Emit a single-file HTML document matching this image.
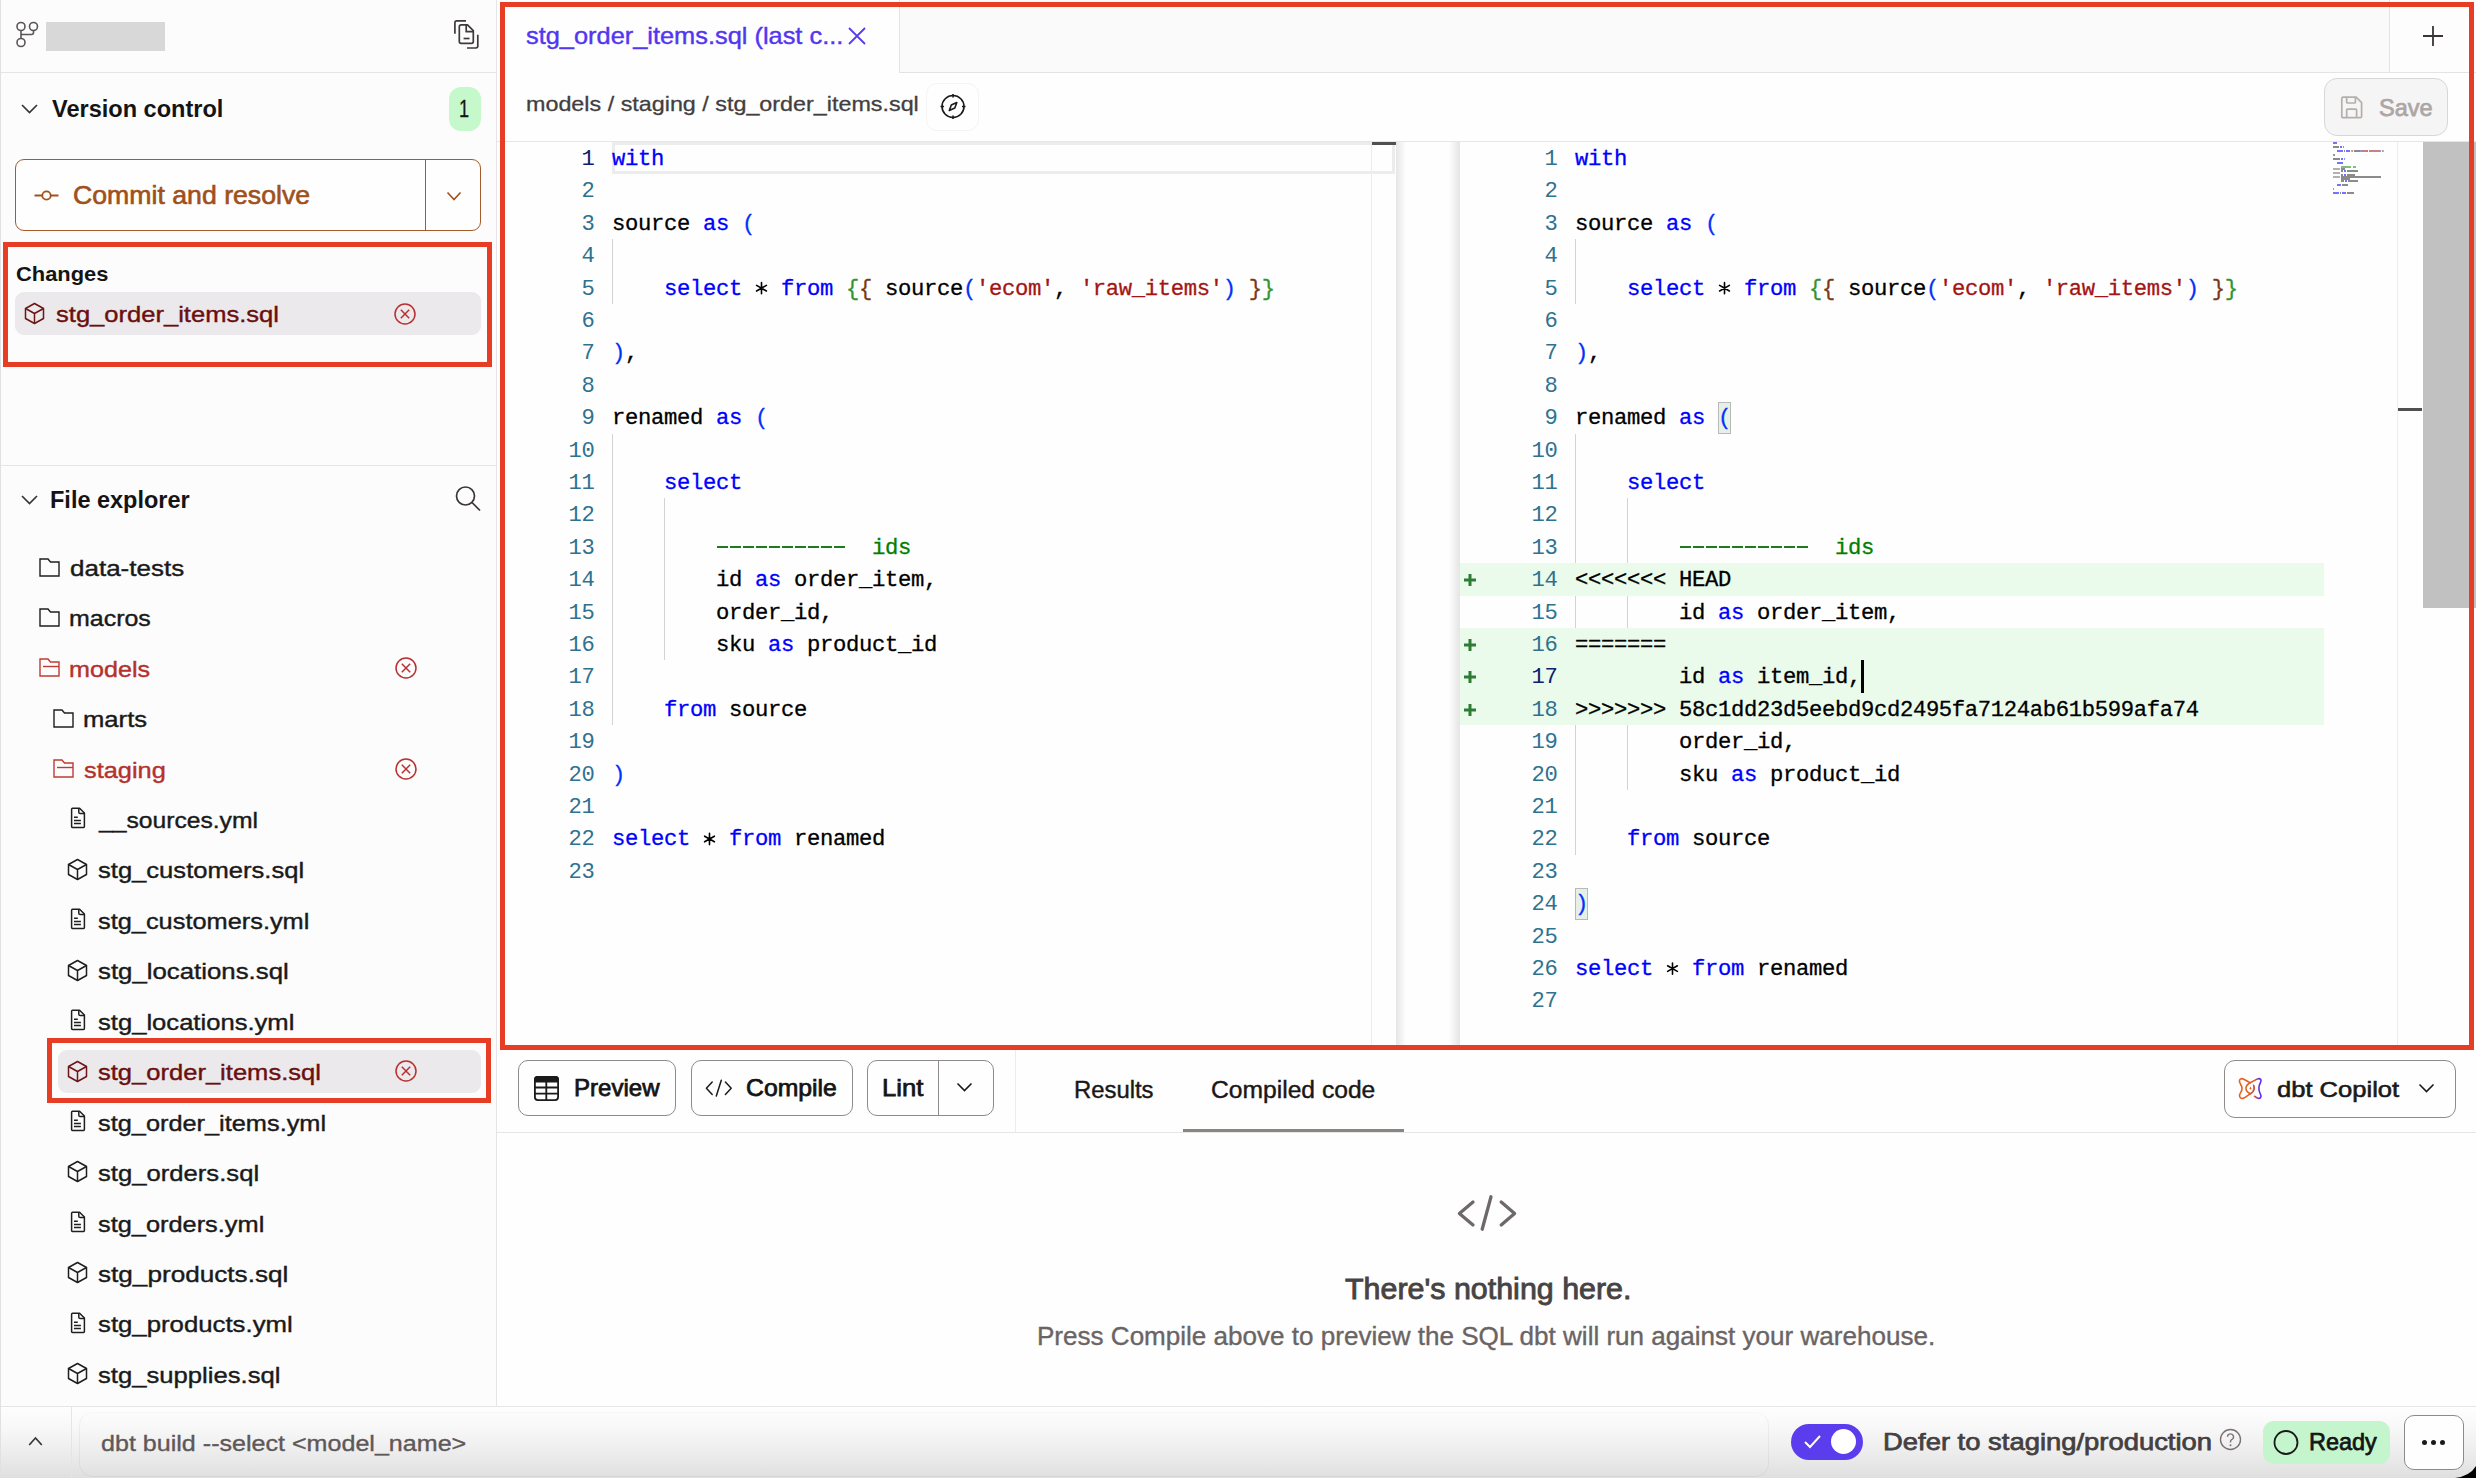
<!DOCTYPE html><html><head><meta charset="utf-8"><style>html,body{margin:0;padding:0;width:2476px;height:1478px;overflow:hidden;background:#fefefe;position:relative}</style></head><body>
<div style="position:absolute;left:0px;top:0px;width:496px;height:1406px;background:#fcfcfc"></div>
<div style="position:absolute;left:0px;top:0px;width:1px;height:1406px;background:#e9e7e9"></div>
<div style="position:absolute;left:496px;top:0px;width:1px;height:1406px;background:#e6e4e6"></div>
<div style="position:absolute;left:0px;top:72px;width:496px;height:1px;background:#e6e4e6"></div>
<svg style="position:absolute;left:14px;top:19px" width="28" height="30" viewBox="0 0 28 30" fill="none"><g stroke="#5a5555" stroke-width="1.6"><circle cx="7" cy="7.5" r="4"/><circle cx="19.5" cy="7.5" r="4"/><circle cx="7" cy="23.5" r="4"/><path d="M7 11.5V19.5M7 15.5h10.5q2 0 2-2V11.5"/></g></svg>
<div style="position:absolute;left:46px;top:22px;width:119px;height:29px;background:#d8d8d8"></div>
<svg style="position:absolute;left:446px;top:14px" width="40" height="40" viewBox="0 0 40 40" fill="none"><g stroke="#3f3a3a" stroke-width="1.7" fill="none" stroke-linejoin="round"><path d="M8.9 19.7V8.8Q8.9 6.9 10.8 6.9H20"/><path d="M13.3 12.8Q13.3 10.9 15.2 10.9H21.5L27.3 16.7V27.4Q27.3 29.3 25.4 29.3H15.2Q13.3 29.3 13.3 27.4Z"/><path d="M20.2 11V17.7H27.3"/><path d="M17.6 24.5H23.5"/><path d="M31.8 20.8V32.1Q31.8 34 29.9 34H21"/></g></svg>
<svg style="position:absolute;left:20px;top:102px" width="20" height="14" viewBox="0 0 20 14" fill="none"><path d="M2 3l7.5 7.5L17 3" stroke="#3a3535" stroke-width="1.7" fill="none"/></svg>
<div style="position:absolute;left:52.30px;top:96.91px;font:700 24.2px/24.2px 'Liberation Sans', sans-serif;color:#141414;white-space:pre;transform:scaleX(0.9733);transform-origin:0 0;">Version control</div>
<div style="position:absolute;left:449px;top:87px;width:32px;height:44px;background:#c5f9cb;border-radius:12px"></div>
<div style="position:absolute;left:459.23px;top:98.01px;font:400 23.5px/23.5px 'Liberation Sans', sans-serif;color:#141414;white-space:pre;transform:scaleX(0.7727);transform-origin:0 0;-webkit-text-stroke:0.3px #141414">1</div>
<div style="position:absolute;left:15px;top:159px;width:466px;height:72px;box-sizing:border-box;border:1.5px solid #a35a2c;border-radius:9px;background:#fefefe"></div>
<div style="position:absolute;left:425px;top:160px;width:1.2px;height:70px;background:#a35a2c"></div>
<svg style="position:absolute;left:33px;top:186px" width="28" height="20" viewBox="0 0 28 20" fill="none"><g stroke="#a0521c" stroke-width="1.8" fill="none"><circle cx="13.5" cy="9.5" r="4.2"/><path d="M1.5 9.5h7.8M17.7 9.5h7.8"/></g></svg>
<div style="position:absolute;left:73.35px;top:182.68px;font:400 25.3px/25.3px 'Liberation Sans', sans-serif;color:#a0501a;white-space:pre;transform:scaleX(1.0540);transform-origin:0 0;-webkit-text-stroke:0.6px #a0501a">Commit and resolve</div>
<svg style="position:absolute;left:444px;top:189px" width="20" height="14" viewBox="0 0 20 14" fill="none"><path d="M3.5 3.5l6.5 7 6.5-7" stroke="#a0521c" stroke-width="1.6" fill="none"/></svg>
<div style="position:absolute;left:15.70px;top:262.52px;font:700 21px/21px 'Liberation Sans', sans-serif;color:#141414;white-space:pre;transform:scaleX(1.0420);transform-origin:0 0;">Changes</div>
<div style="position:absolute;left:15px;top:292px;width:466px;height:43px;background:#ebe9eb;border-radius:9px"></div>
<svg style="position:absolute;left:24px;top:302px" width="22" height="24" viewBox="0 0 22 24" fill="none"><g stroke="#6e1515" stroke-width="1.5" fill="none" stroke-linejoin="round"><path d="M10.5 1.5l9 5v10l-9 5-9-5v-10z"/><path d="M1.5 6.5l9 5 9-5M10.5 11.5v10"/></g></svg>
<div style="position:absolute;left:55.50px;top:303.20px;font:400 22.8px/22.8px 'Liberation Sans', sans-serif;color:#6b0f0f;white-space:pre;transform:scaleX(1.1210);transform-origin:0 0;-webkit-text-stroke:0.4px #6b0f0f">stg_order_items.sql</div>
<svg style="position:absolute;left:394px;top:303px" width="22" height="22" viewBox="0 0 22 22" fill="none"><g stroke="#b83030" stroke-width="1.5" fill="none"><circle cx="11" cy="11" r="10"/><path d="M6.8 6.8l8.4 8.4M15.2 6.8l-8.4 8.4"/></g></svg>
<div style="position:absolute;left:0px;top:465px;width:496px;height:1px;background:#e6e4e6"></div>
<svg style="position:absolute;left:20px;top:493px" width="20" height="14" viewBox="0 0 20 14" fill="none"><path d="M2 3l7.5 7.5L17 3" stroke="#3a3535" stroke-width="1.7" fill="none"/></svg>
<div style="position:absolute;left:50.43px;top:488.01px;font:700 24.2px/24.2px 'Liberation Sans', sans-serif;color:#141414;white-space:pre;transform:scaleX(0.9712);transform-origin:0 0;">File explorer</div>
<svg style="position:absolute;left:453px;top:484px" width="30" height="30" viewBox="0 0 30 30" fill="none"><g stroke="#3a3535" stroke-width="1.7" fill="none"><circle cx="12.5" cy="12" r="9"/><path d="M19 18.5l8 8"/></g></svg>
<svg style="position:absolute;left:38.5px;top:558px" width="22" height="20" viewBox="0 0 22 20" fill="none"><path d="M1 1h8l2.5 3H20v14H1z" stroke="#1f1f1f" stroke-width="1.4" fill="none" stroke-linejoin="miter"/></svg>
<div style="position:absolute;left:69.90px;top:556.70px;font:400 22.8px/22.8px 'Liberation Sans', sans-serif;color:#1a1a1a;white-space:pre;transform:scaleX(1.1404);transform-origin:0 0;-webkit-text-stroke:0.4px #1a1a1a">data-tests</div>
<svg style="position:absolute;left:38.5px;top:608px" width="22" height="20" viewBox="0 0 22 20" fill="none"><path d="M1 1h8l2.5 3H20v14H1z" stroke="#1f1f1f" stroke-width="1.4" fill="none" stroke-linejoin="miter"/></svg>
<div style="position:absolute;left:68.81px;top:607.15px;font:400 22.8px/22.8px 'Liberation Sans', sans-serif;color:#1a1a1a;white-space:pre;transform:scaleX(1.0949);transform-origin:0 0;-webkit-text-stroke:0.4px #1a1a1a">macros</div>
<svg style="position:absolute;left:38.5px;top:658px" width="22" height="20" viewBox="0 0 22 20" fill="none"><g stroke="#c03a33" stroke-width="1.4" fill="none"><path d="M1 1h8l2.5 3H20v14H1z"/><path d="M4 8.5h16"/></g></svg>
<div style="position:absolute;left:68.80px;top:657.60px;font:400 22.8px/22.8px 'Liberation Sans', sans-serif;color:#b5322c;white-space:pre;transform:scaleX(1.1028);transform-origin:0 0;-webkit-text-stroke:0.4px #b5322c">models</div>
<svg style="position:absolute;left:394.5px;top:657px" width="22" height="22" viewBox="0 0 22 22" fill="none"><g stroke="#b83030" stroke-width="1.5" fill="none"><circle cx="11" cy="11" r="10"/><path d="M6.8 6.8l8.4 8.4M15.2 6.8l-8.4 8.4"/></g></svg>
<svg style="position:absolute;left:52.5px;top:709px" width="22" height="20" viewBox="0 0 22 20" fill="none"><path d="M1 1h8l2.5 3H20v14H1z" stroke="#1f1f1f" stroke-width="1.4" fill="none" stroke-linejoin="miter"/></svg>
<div style="position:absolute;left:83.08px;top:708.05px;font:400 22.8px/22.8px 'Liberation Sans', sans-serif;color:#1a1a1a;white-space:pre;transform:scaleX(1.1242);transform-origin:0 0;-webkit-text-stroke:0.4px #1a1a1a">marts</div>
<svg style="position:absolute;left:52.5px;top:759px" width="22" height="20" viewBox="0 0 22 20" fill="none"><g stroke="#c03a33" stroke-width="1.4" fill="none"><path d="M1 1h8l2.5 3H20v14H1z"/><path d="M4 8.5h16"/></g></svg>
<div style="position:absolute;left:84.20px;top:758.50px;font:400 22.8px/22.8px 'Liberation Sans', sans-serif;color:#b5322c;white-space:pre;transform:scaleX(1.1121);transform-origin:0 0;-webkit-text-stroke:0.4px #b5322c">staging</div>
<svg style="position:absolute;left:394.5px;top:758px" width="22" height="22" viewBox="0 0 22 22" fill="none"><g stroke="#b83030" stroke-width="1.5" fill="none"><circle cx="11" cy="11" r="10"/><path d="M6.8 6.8l8.4 8.4M15.2 6.8l-8.4 8.4"/></g></svg>
<svg style="position:absolute;left:69.5px;top:807px" width="16" height="22" viewBox="0 0 16 22" fill="none"><g stroke="#1f1f1f" stroke-width="1.5" fill="none" stroke-linejoin="round"><path d="M1.6 2.2Q1.6 1.2 2.6 1.2H9.6L14.4 6V19.6Q14.4 20.4 13.6 20.4H2.4Q1.6 20.4 1.6 19.6Z"/><path d="M8.8 1.2V5.2Q8.8 6.6 10.2 6.6H14.4"/><path d="M4 10.2h3.8M4 13.4h6.9M4 16.4h6.9"/></g></svg>
<div style="position:absolute;left:99.38px;top:808.95px;font:400 22.8px/22.8px 'Liberation Sans', sans-serif;color:#1a1a1a;white-space:pre;transform:scaleX(1.0817);transform-origin:0 0;-webkit-text-stroke:0.4px #1a1a1a">__sources.yml</div>
<svg style="position:absolute;left:67px;top:858px" width="22" height="24" viewBox="0 0 22 24" fill="none"><g stroke="#1f1f1f" stroke-width="1.5" fill="none" stroke-linejoin="round"><path d="M10.5 1.5l9 5v10l-9 5-9-5v-10z"/><path d="M1.5 6.5l9 5 9-5M10.5 11.5v10"/></g></svg>
<div style="position:absolute;left:98.30px;top:859.40px;font:400 22.8px/22.8px 'Liberation Sans', sans-serif;color:#1a1a1a;white-space:pre;transform:scaleX(1.1218);transform-origin:0 0;-webkit-text-stroke:0.4px #1a1a1a">stg_customers.sql</div>
<svg style="position:absolute;left:69.5px;top:908px" width="16" height="22" viewBox="0 0 16 22" fill="none"><g stroke="#1f1f1f" stroke-width="1.5" fill="none" stroke-linejoin="round"><path d="M1.6 2.2Q1.6 1.2 2.6 1.2H9.6L14.4 6V19.6Q14.4 20.4 13.6 20.4H2.4Q1.6 20.4 1.6 19.6Z"/><path d="M8.8 1.2V5.2Q8.8 6.6 10.2 6.6H14.4"/><path d="M4 10.2h3.8M4 13.4h6.9M4 16.4h6.9"/></g></svg>
<div style="position:absolute;left:98.30px;top:909.85px;font:400 22.8px/22.8px 'Liberation Sans', sans-serif;color:#1a1a1a;white-space:pre;transform:scaleX(1.1124);transform-origin:0 0;-webkit-text-stroke:0.4px #1a1a1a">stg_customers.yml</div>
<svg style="position:absolute;left:67px;top:959px" width="22" height="24" viewBox="0 0 22 24" fill="none"><g stroke="#1f1f1f" stroke-width="1.5" fill="none" stroke-linejoin="round"><path d="M10.5 1.5l9 5v10l-9 5-9-5v-10z"/><path d="M1.5 6.5l9 5 9-5M10.5 11.5v10"/></g></svg>
<div style="position:absolute;left:98.30px;top:960.30px;font:400 22.8px/22.8px 'Liberation Sans', sans-serif;color:#1a1a1a;white-space:pre;transform:scaleX(1.1315);transform-origin:0 0;-webkit-text-stroke:0.4px #1a1a1a">stg_locations.sql</div>
<svg style="position:absolute;left:69.5px;top:1009px" width="16" height="22" viewBox="0 0 16 22" fill="none"><g stroke="#1f1f1f" stroke-width="1.5" fill="none" stroke-linejoin="round"><path d="M1.6 2.2Q1.6 1.2 2.6 1.2H9.6L14.4 6V19.6Q14.4 20.4 13.6 20.4H2.4Q1.6 20.4 1.6 19.6Z"/><path d="M8.8 1.2V5.2Q8.8 6.6 10.2 6.6H14.4"/><path d="M4 10.2h3.8M4 13.4h6.9M4 16.4h6.9"/></g></svg>
<div style="position:absolute;left:98.30px;top:1010.75px;font:400 22.8px/22.8px 'Liberation Sans', sans-serif;color:#1a1a1a;white-space:pre;transform:scaleX(1.1232);transform-origin:0 0;-webkit-text-stroke:0.4px #1a1a1a">stg_locations.yml</div>
<div style="position:absolute;left:58px;top:1050px;width:423px;height:43px;background:#ebe9eb;border-radius:9px"></div>
<svg style="position:absolute;left:67px;top:1060px" width="22" height="24" viewBox="0 0 22 24" fill="none"><g stroke="#6e1515" stroke-width="1.5" fill="none" stroke-linejoin="round"><path d="M10.5 1.5l9 5v10l-9 5-9-5v-10z"/><path d="M1.5 6.5l9 5 9-5M10.5 11.5v10"/></g></svg>
<div style="position:absolute;left:98.30px;top:1061.20px;font:400 22.8px/22.8px 'Liberation Sans', sans-serif;color:#6b0f0f;white-space:pre;transform:scaleX(1.1205);transform-origin:0 0;-webkit-text-stroke:0.4px #6b0f0f">stg_order_items.sql</div>
<svg style="position:absolute;left:394.5px;top:1060px" width="22" height="22" viewBox="0 0 22 22" fill="none"><g stroke="#b83030" stroke-width="1.5" fill="none"><circle cx="11" cy="11" r="10"/><path d="M6.8 6.8l8.4 8.4M15.2 6.8l-8.4 8.4"/></g></svg>
<svg style="position:absolute;left:69.5px;top:1110px" width="16" height="22" viewBox="0 0 16 22" fill="none"><g stroke="#1f1f1f" stroke-width="1.5" fill="none" stroke-linejoin="round"><path d="M1.6 2.2Q1.6 1.2 2.6 1.2H9.6L14.4 6V19.6Q14.4 20.4 13.6 20.4H2.4Q1.6 20.4 1.6 19.6Z"/><path d="M8.8 1.2V5.2Q8.8 6.6 10.2 6.6H14.4"/><path d="M4 10.2h3.8M4 13.4h6.9M4 16.4h6.9"/></g></svg>
<div style="position:absolute;left:98.30px;top:1111.65px;font:400 22.8px/22.8px 'Liberation Sans', sans-serif;color:#1a1a1a;white-space:pre;transform:scaleX(1.1113);transform-origin:0 0;-webkit-text-stroke:0.4px #1a1a1a">stg_order_items.yml</div>
<svg style="position:absolute;left:67px;top:1160px" width="22" height="24" viewBox="0 0 22 24" fill="none"><g stroke="#1f1f1f" stroke-width="1.5" fill="none" stroke-linejoin="round"><path d="M10.5 1.5l9 5v10l-9 5-9-5v-10z"/><path d="M1.5 6.5l9 5 9-5M10.5 11.5v10"/></g></svg>
<div style="position:absolute;left:98.30px;top:1162.10px;font:400 22.8px/22.8px 'Liberation Sans', sans-serif;color:#1a1a1a;white-space:pre;transform:scaleX(1.1251);transform-origin:0 0;-webkit-text-stroke:0.4px #1a1a1a">stg_orders.sql</div>
<svg style="position:absolute;left:69.5px;top:1211px" width="16" height="22" viewBox="0 0 16 22" fill="none"><g stroke="#1f1f1f" stroke-width="1.5" fill="none" stroke-linejoin="round"><path d="M1.6 2.2Q1.6 1.2 2.6 1.2H9.6L14.4 6V19.6Q14.4 20.4 13.6 20.4H2.4Q1.6 20.4 1.6 19.6Z"/><path d="M8.8 1.2V5.2Q8.8 6.6 10.2 6.6H14.4"/><path d="M4 10.2h3.8M4 13.4h6.9M4 16.4h6.9"/></g></svg>
<div style="position:absolute;left:98.30px;top:1212.55px;font:400 22.8px/22.8px 'Liberation Sans', sans-serif;color:#1a1a1a;white-space:pre;transform:scaleX(1.1123);transform-origin:0 0;-webkit-text-stroke:0.4px #1a1a1a">stg_orders.yml</div>
<svg style="position:absolute;left:67px;top:1261px" width="22" height="24" viewBox="0 0 22 24" fill="none"><g stroke="#1f1f1f" stroke-width="1.5" fill="none" stroke-linejoin="round"><path d="M10.5 1.5l9 5v10l-9 5-9-5v-10z"/><path d="M1.5 6.5l9 5 9-5M10.5 11.5v10"/></g></svg>
<div style="position:absolute;left:98.30px;top:1263.00px;font:400 22.8px/22.8px 'Liberation Sans', sans-serif;color:#1a1a1a;white-space:pre;transform:scaleX(1.1465);transform-origin:0 0;-webkit-text-stroke:0.4px #1a1a1a">stg_products.sql</div>
<svg style="position:absolute;left:69.5px;top:1312px" width="16" height="22" viewBox="0 0 16 22" fill="none"><g stroke="#1f1f1f" stroke-width="1.5" fill="none" stroke-linejoin="round"><path d="M1.6 2.2Q1.6 1.2 2.6 1.2H9.6L14.4 6V19.6Q14.4 20.4 13.6 20.4H2.4Q1.6 20.4 1.6 19.6Z"/><path d="M8.8 1.2V5.2Q8.8 6.6 10.2 6.6H14.4"/><path d="M4 10.2h3.8M4 13.4h6.9M4 16.4h6.9"/></g></svg>
<div style="position:absolute;left:98.30px;top:1313.45px;font:400 22.8px/22.8px 'Liberation Sans', sans-serif;color:#1a1a1a;white-space:pre;transform:scaleX(1.1299);transform-origin:0 0;-webkit-text-stroke:0.4px #1a1a1a">stg_products.yml</div>
<svg style="position:absolute;left:67px;top:1362px" width="22" height="24" viewBox="0 0 22 24" fill="none"><g stroke="#1f1f1f" stroke-width="1.5" fill="none" stroke-linejoin="round"><path d="M10.5 1.5l9 5v10l-9 5-9-5v-10z"/><path d="M1.5 6.5l9 5 9-5M10.5 11.5v10"/></g></svg>
<div style="position:absolute;left:98.30px;top:1363.90px;font:400 22.8px/22.8px 'Liberation Sans', sans-serif;color:#1a1a1a;white-space:pre;transform:scaleX(1.1251);transform-origin:0 0;-webkit-text-stroke:0.4px #1a1a1a">stg_supplies.sql</div>
<div style="position:absolute;left:497px;top:0px;width:1979px;height:72px;background:#fafafa"></div>
<div style="position:absolute;left:899px;top:72px;width:1577px;height:1px;background:#e4e4e4"></div>
<div style="position:absolute;left:497px;top:0px;width:402px;height:73px;background:#fefefe"></div>
<div style="position:absolute;left:899px;top:0px;width:1px;height:72px;background:#e4e4e4"></div>
<div style="position:absolute;left:2389px;top:0px;width:1px;height:72px;background:#e4e4e4"></div>
<div style="position:absolute;left:2390px;top:0px;width:86px;height:72px;background:#fdfdfd"></div>
<div style="position:absolute;left:526.30px;top:25.16px;font:400 23.2px/23.2px 'Liberation Sans', sans-serif;color:#5236f0;white-space:pre;transform:scaleX(1.0943);transform-origin:0 0;-webkit-text-stroke:0.4px #5236f0">stg_order_items.sql (last c...</div>
<svg style="position:absolute;left:847px;top:26px" width="20" height="20" viewBox="0 0 20 20" fill="none"><path d="M2 2l16 16M18 2L2 18" stroke="#5a3af0" stroke-width="1.8"/></svg>
<svg style="position:absolute;left:2421px;top:24px" width="24" height="24" viewBox="0 0 24 24" fill="none"><path d="M12 2v20M2 12h20" stroke="#3a3535" stroke-width="1.8"/></svg>
<div style="position:absolute;left:497px;top:73px;width:1979px;height:69px;background:#fefefe"></div>
<div style="position:absolute;left:497px;top:141px;width:1979px;height:1px;background:#e6e6e6"></div>
<div style="position:absolute;left:525.88px;top:94.09px;font:400 20.8px/20.8px 'Liberation Sans', sans-serif;color:#433e3e;white-space:pre;transform:scaleX(1.1215);transform-origin:0 0;-webkit-text-stroke:0.3px #433e3e">models / staging / stg_order_items.sql</div>
<div style="position:absolute;left:926px;top:83px;width:53px;height:48px;box-sizing:border-box;border:1px solid #f4f4f4;border-radius:11px;background:#fefefe"></div>
<svg style="position:absolute;left:939px;top:93px" width="28" height="28" viewBox="0 0 28 28" fill="none"><g stroke="#1a1a1a" stroke-width="1.6" fill="none"><circle cx="14" cy="13.5" r="11"/><path d="M14 1v3.5M14 22.5V26M1.5 13.5H5M23 13.5h3.5"/><path d="M17.8 9.5l-2 5.5-5.5 2.5 2-5.5z" stroke-linejoin="round"/></g></svg>
<div style="position:absolute;left:2324px;top:78px;width:124px;height:58px;box-sizing:border-box;border:1.5px solid #d9d6d6;border-radius:13px;background:#f5f5f5"></div>
<svg style="position:absolute;left:2339px;top:95px" width="26" height="26" viewBox="0 0 26 26" fill="none"><g stroke="#b4aeac" stroke-width="1.7" fill="none" stroke-linejoin="round"><path d="M2.8 3.4Q2.8 2.2 4 2.2H17.2L22.6 7.6V21.4Q22.6 22.6 21.4 22.6H4Q2.8 22.6 2.8 21.4Z"/><path d="M7.7 2.2V7.2Q7.7 8 8.5 8H15.6Q16.4 8 16.4 7.2V2.2"/><path d="M7.7 22.6V15Q7.7 14.2 8.5 14.2H16.8Q17.6 14.2 17.6 15V22.6"/></g></svg>
<div style="position:absolute;left:2378.74px;top:95.98px;font:400 24.6px/24.6px 'Liberation Sans', sans-serif;color:#aca6a4;white-space:pre;transform:scaleX(0.9581);transform-origin:0 0;-webkit-text-stroke:0.75px #aca6a4">Save</div>
<div style="position:absolute;left:497px;top:142px;width:1979px;height:908px;background:#fefefe"></div>
<div style="position:absolute;left:612px;top:142px;width:783px;height:32px;box-sizing:border-box;border:3px solid #ececec"></div>
<div style="position:absolute;left:612.0px;top:239.2px;width:1.3px;height:64.8px;background:#d3d3d3"></div>
<div style="position:absolute;left:612.0px;top:433.6px;width:1.3px;height:291.6px;background:#d3d3d3"></div>
<div style="position:absolute;left:664.0px;top:498.4px;width:1.3px;height:162.0px;background:#d3d3d3"></div>
<div style="position:absolute;left:581.5px;top:149.08px;font:400 22.2px/22.2px 'Liberation Mono', monospace;color:#0b216f;white-space:pre;letter-spacing:-0.32px">1</div>
<div style="position:absolute;left:612px;top:149.08px;font:400 22.2px/22.2px 'Liberation Mono', monospace;color:#000;white-space:pre;letter-spacing:-0.32px;-webkit-text-stroke:0.3px currentColor"><span style="color:#0000ff">with</span></div>
<div style="position:absolute;left:581.5px;top:181.48px;font:400 22.2px/22.2px 'Liberation Mono', monospace;color:#2e7290;white-space:pre;letter-spacing:-0.32px">2</div>
<div style="position:absolute;left:581.5px;top:213.88px;font:400 22.2px/22.2px 'Liberation Mono', monospace;color:#2e7290;white-space:pre;letter-spacing:-0.32px">3</div>
<div style="position:absolute;left:612px;top:213.88px;font:400 22.2px/22.2px 'Liberation Mono', monospace;color:#000;white-space:pre;letter-spacing:-0.32px;-webkit-text-stroke:0.3px currentColor"><span style="color:#000000">source</span><span style="color:#000000"> </span><span style="color:#0000ff">as</span><span style="color:#000000"> </span><span style="color:#0431fa">(</span></div>
<div style="position:absolute;left:581.5px;top:246.28px;font:400 22.2px/22.2px 'Liberation Mono', monospace;color:#2e7290;white-space:pre;letter-spacing:-0.32px">4</div>
<div style="position:absolute;left:581.5px;top:278.68px;font:400 22.2px/22.2px 'Liberation Mono', monospace;color:#2e7290;white-space:pre;letter-spacing:-0.32px">5</div>
<div style="position:absolute;left:612px;top:278.68px;font:400 22.2px/22.2px 'Liberation Mono', monospace;color:#000;white-space:pre;letter-spacing:-0.32px;-webkit-text-stroke:0.3px currentColor"><span style="color:#000000">    </span><span style="color:#0000ff">select</span><span style="color:#000000"> </span><span style="color:#000000"> </span><span style="color:#000000"> </span><span style="color:#0000ff">from</span><span style="color:#000000"> </span><span style="color:#319331">{</span><span style="color:#7b3814">{</span><span style="color:#000000"> </span><span style="color:#000000">source</span><span style="color:#0431fa">(</span><span style="color:#a31515">&#x27;ecom&#x27;</span><span style="color:#000000">,</span><span style="color:#000000"> </span><span style="color:#a31515">&#x27;raw_items&#x27;</span><span style="color:#0431fa">)</span><span style="color:#000000"> </span><span style="color:#7b3814">}</span><span style="color:#319331">}</span></div>
<svg style="position:absolute;left:754px;top:280px" width="16" height="16" viewBox="0 0 16 16" fill="none"><g stroke="#000" stroke-width="1.6" stroke-linecap="round" transform="translate(7.50,8.20)"><path d="M0 -5.6V5.6M-4.9 -2.8L4.9 2.8M-4.9 2.8L4.9 -2.8"/></g></svg>
<div style="position:absolute;left:581.5px;top:311.08px;font:400 22.2px/22.2px 'Liberation Mono', monospace;color:#2e7290;white-space:pre;letter-spacing:-0.32px">6</div>
<div style="position:absolute;left:581.5px;top:343.48px;font:400 22.2px/22.2px 'Liberation Mono', monospace;color:#2e7290;white-space:pre;letter-spacing:-0.32px">7</div>
<div style="position:absolute;left:612px;top:343.48px;font:400 22.2px/22.2px 'Liberation Mono', monospace;color:#000;white-space:pre;letter-spacing:-0.32px;-webkit-text-stroke:0.3px currentColor"><span style="color:#0431fa">)</span><span style="color:#000000">,</span></div>
<div style="position:absolute;left:581.5px;top:375.88px;font:400 22.2px/22.2px 'Liberation Mono', monospace;color:#2e7290;white-space:pre;letter-spacing:-0.32px">8</div>
<div style="position:absolute;left:581.5px;top:408.28px;font:400 22.2px/22.2px 'Liberation Mono', monospace;color:#2e7290;white-space:pre;letter-spacing:-0.32px">9</div>
<div style="position:absolute;left:612px;top:408.28px;font:400 22.2px/22.2px 'Liberation Mono', monospace;color:#000;white-space:pre;letter-spacing:-0.32px;-webkit-text-stroke:0.3px currentColor"><span style="color:#000000">renamed</span><span style="color:#000000"> </span><span style="color:#0000ff">as</span><span style="color:#000000"> </span><span style="color:#0431fa">(</span></div>
<div style="position:absolute;left:568.5px;top:440.68px;font:400 22.2px/22.2px 'Liberation Mono', monospace;color:#2e7290;white-space:pre;letter-spacing:-0.32px">10</div>
<div style="position:absolute;left:568.5px;top:473.08px;font:400 22.2px/22.2px 'Liberation Mono', monospace;color:#2e7290;white-space:pre;letter-spacing:-0.32px">11</div>
<div style="position:absolute;left:612px;top:473.08px;font:400 22.2px/22.2px 'Liberation Mono', monospace;color:#000;white-space:pre;letter-spacing:-0.32px;-webkit-text-stroke:0.3px currentColor"><span style="color:#000000">    </span><span style="color:#0000ff">select</span></div>
<div style="position:absolute;left:568.5px;top:505.48px;font:400 22.2px/22.2px 'Liberation Mono', monospace;color:#2e7290;white-space:pre;letter-spacing:-0.32px">12</div>
<div style="position:absolute;left:568.5px;top:537.88px;font:400 22.2px/22.2px 'Liberation Mono', monospace;color:#2e7290;white-space:pre;letter-spacing:-0.32px">13</div>
<div style="position:absolute;left:612px;top:537.88px;font:400 22.2px/22.2px 'Liberation Mono', monospace;color:#000;white-space:pre;letter-spacing:-0.32px;-webkit-text-stroke:0.3px currentColor"><span style="color:#000000">        </span><span style="color:#008000">            ids</span></div>
<div style="position:absolute;left:717.0px;top:546.1px;width:128.0px;height:2.2px;background:repeating-linear-gradient(to right,#1d7a1d 0 11px,transparent 11px 13px)"></div>
<div style="position:absolute;left:568.5px;top:570.28px;font:400 22.2px/22.2px 'Liberation Mono', monospace;color:#2e7290;white-space:pre;letter-spacing:-0.32px">14</div>
<div style="position:absolute;left:612px;top:570.28px;font:400 22.2px/22.2px 'Liberation Mono', monospace;color:#000;white-space:pre;letter-spacing:-0.32px;-webkit-text-stroke:0.3px currentColor"><span style="color:#000000">        </span><span style="color:#000000">id</span><span style="color:#000000"> </span><span style="color:#0000ff">as</span><span style="color:#000000"> </span><span style="color:#000000">order_item</span><span style="color:#000000">,</span></div>
<div style="position:absolute;left:568.5px;top:602.68px;font:400 22.2px/22.2px 'Liberation Mono', monospace;color:#2e7290;white-space:pre;letter-spacing:-0.32px">15</div>
<div style="position:absolute;left:612px;top:602.68px;font:400 22.2px/22.2px 'Liberation Mono', monospace;color:#000;white-space:pre;letter-spacing:-0.32px;-webkit-text-stroke:0.3px currentColor"><span style="color:#000000">        </span><span style="color:#000000">order_id</span><span style="color:#000000">,</span></div>
<div style="position:absolute;left:568.5px;top:635.08px;font:400 22.2px/22.2px 'Liberation Mono', monospace;color:#2e7290;white-space:pre;letter-spacing:-0.32px">16</div>
<div style="position:absolute;left:612px;top:635.08px;font:400 22.2px/22.2px 'Liberation Mono', monospace;color:#000;white-space:pre;letter-spacing:-0.32px;-webkit-text-stroke:0.3px currentColor"><span style="color:#000000">        </span><span style="color:#000000">sku</span><span style="color:#000000"> </span><span style="color:#0000ff">as</span><span style="color:#000000"> </span><span style="color:#000000">product_id</span></div>
<div style="position:absolute;left:568.5px;top:667.48px;font:400 22.2px/22.2px 'Liberation Mono', monospace;color:#2e7290;white-space:pre;letter-spacing:-0.32px">17</div>
<div style="position:absolute;left:568.5px;top:699.88px;font:400 22.2px/22.2px 'Liberation Mono', monospace;color:#2e7290;white-space:pre;letter-spacing:-0.32px">18</div>
<div style="position:absolute;left:612px;top:699.88px;font:400 22.2px/22.2px 'Liberation Mono', monospace;color:#000;white-space:pre;letter-spacing:-0.32px;-webkit-text-stroke:0.3px currentColor"><span style="color:#000000">    </span><span style="color:#0000ff">from</span><span style="color:#000000"> </span><span style="color:#000000">source</span></div>
<div style="position:absolute;left:568.5px;top:732.28px;font:400 22.2px/22.2px 'Liberation Mono', monospace;color:#2e7290;white-space:pre;letter-spacing:-0.32px">19</div>
<div style="position:absolute;left:568.5px;top:764.68px;font:400 22.2px/22.2px 'Liberation Mono', monospace;color:#2e7290;white-space:pre;letter-spacing:-0.32px">20</div>
<div style="position:absolute;left:612px;top:764.68px;font:400 22.2px/22.2px 'Liberation Mono', monospace;color:#000;white-space:pre;letter-spacing:-0.32px;-webkit-text-stroke:0.3px currentColor"><span style="color:#0431fa">)</span></div>
<div style="position:absolute;left:568.5px;top:797.08px;font:400 22.2px/22.2px 'Liberation Mono', monospace;color:#2e7290;white-space:pre;letter-spacing:-0.32px">21</div>
<div style="position:absolute;left:568.5px;top:829.48px;font:400 22.2px/22.2px 'Liberation Mono', monospace;color:#2e7290;white-space:pre;letter-spacing:-0.32px">22</div>
<div style="position:absolute;left:612px;top:829.48px;font:400 22.2px/22.2px 'Liberation Mono', monospace;color:#000;white-space:pre;letter-spacing:-0.32px;-webkit-text-stroke:0.3px currentColor"><span style="color:#0000ff">select</span><span style="color:#000000"> </span><span style="color:#000000"> </span><span style="color:#000000"> </span><span style="color:#0000ff">from</span><span style="color:#000000"> </span><span style="color:#000000">renamed</span></div>
<svg style="position:absolute;left:702px;top:831px" width="16" height="16" viewBox="0 0 16 16" fill="none"><g stroke="#000" stroke-width="1.6" stroke-linecap="round" transform="translate(7.50,8.00)"><path d="M0 -5.6V5.6M-4.9 -2.8L4.9 2.8M-4.9 2.8L4.9 -2.8"/></g></svg>
<div style="position:absolute;left:568.5px;top:861.88px;font:400 22.2px/22.2px 'Liberation Mono', monospace;color:#2e7290;white-space:pre;letter-spacing:-0.32px">23</div>
<div style="position:absolute;left:1460px;top:563.2px;width:864px;height:32.4px;background:#eafbec"></div>
<div style="position:absolute;left:1460px;top:628.0px;width:864px;height:32.4px;background:#eafbec"></div>
<div style="position:absolute;left:1460px;top:660.4px;width:864px;height:32.4px;background:#eafbec"></div>
<div style="position:absolute;left:1460px;top:692.8px;width:864px;height:32.4px;background:#eafbec"></div>
<div style="position:absolute;left:1575.0px;top:239.2px;width:1.3px;height:64.8px;background:#d3d3d3"></div>
<div style="position:absolute;left:1575.0px;top:433.6px;width:1.3px;height:129.6px;background:#d3d3d3"></div>
<div style="position:absolute;left:1575.0px;top:595.6px;width:1.3px;height:32.4px;background:#d3d3d3"></div>
<div style="position:absolute;left:1575.0px;top:725.2px;width:1.3px;height:129.6px;background:#d3d3d3"></div>
<div style="position:absolute;left:1627.0px;top:498.4px;width:1.3px;height:64.8px;background:#d3d3d3"></div>
<div style="position:absolute;left:1627.0px;top:595.6px;width:1.3px;height:32.4px;background:#d3d3d3"></div>
<div style="position:absolute;left:1627.0px;top:725.2px;width:1.3px;height:64.8px;background:#d3d3d3"></div>
<div style="position:absolute;left:1718.0px;top:401.7px;width:13px;height:32px;box-sizing:border-box;border:1px solid #b9b9b9;background:#e6f0e6"></div>
<div style="position:absolute;left:1575.0px;top:887.7px;width:13px;height:32px;box-sizing:border-box;border:1px solid #b9b9b9;background:#e6f0e6"></div>
<div style="position:absolute;left:1544.5px;top:149.08px;font:400 22.2px/22.2px 'Liberation Mono', monospace;color:#2e7290;white-space:pre;letter-spacing:-0.32px">1</div>
<div style="position:absolute;left:1575px;top:149.08px;font:400 22.2px/22.2px 'Liberation Mono', monospace;color:#000;white-space:pre;letter-spacing:-0.32px;-webkit-text-stroke:0.3px currentColor"><span style="color:#0000ff">with</span></div>
<div style="position:absolute;left:1544.5px;top:181.48px;font:400 22.2px/22.2px 'Liberation Mono', monospace;color:#2e7290;white-space:pre;letter-spacing:-0.32px">2</div>
<div style="position:absolute;left:1544.5px;top:213.88px;font:400 22.2px/22.2px 'Liberation Mono', monospace;color:#2e7290;white-space:pre;letter-spacing:-0.32px">3</div>
<div style="position:absolute;left:1575px;top:213.88px;font:400 22.2px/22.2px 'Liberation Mono', monospace;color:#000;white-space:pre;letter-spacing:-0.32px;-webkit-text-stroke:0.3px currentColor"><span style="color:#000000">source</span><span style="color:#000000"> </span><span style="color:#0000ff">as</span><span style="color:#000000"> </span><span style="color:#0431fa">(</span></div>
<div style="position:absolute;left:1544.5px;top:246.28px;font:400 22.2px/22.2px 'Liberation Mono', monospace;color:#2e7290;white-space:pre;letter-spacing:-0.32px">4</div>
<div style="position:absolute;left:1544.5px;top:278.68px;font:400 22.2px/22.2px 'Liberation Mono', monospace;color:#2e7290;white-space:pre;letter-spacing:-0.32px">5</div>
<div style="position:absolute;left:1575px;top:278.68px;font:400 22.2px/22.2px 'Liberation Mono', monospace;color:#000;white-space:pre;letter-spacing:-0.32px;-webkit-text-stroke:0.3px currentColor"><span style="color:#000000">    </span><span style="color:#0000ff">select</span><span style="color:#000000"> </span><span style="color:#000000"> </span><span style="color:#000000"> </span><span style="color:#0000ff">from</span><span style="color:#000000"> </span><span style="color:#319331">{</span><span style="color:#7b3814">{</span><span style="color:#000000"> </span><span style="color:#000000">source</span><span style="color:#0431fa">(</span><span style="color:#a31515">&#x27;ecom&#x27;</span><span style="color:#000000">,</span><span style="color:#000000"> </span><span style="color:#a31515">&#x27;raw_items&#x27;</span><span style="color:#0431fa">)</span><span style="color:#000000"> </span><span style="color:#7b3814">}</span><span style="color:#319331">}</span></div>
<svg style="position:absolute;left:1716px;top:280px" width="16" height="16" viewBox="0 0 16 16" fill="none"><g stroke="#000" stroke-width="1.6" stroke-linecap="round" transform="translate(8.50,8.20)"><path d="M0 -5.6V5.6M-4.9 -2.8L4.9 2.8M-4.9 2.8L4.9 -2.8"/></g></svg>
<div style="position:absolute;left:1544.5px;top:311.08px;font:400 22.2px/22.2px 'Liberation Mono', monospace;color:#2e7290;white-space:pre;letter-spacing:-0.32px">6</div>
<div style="position:absolute;left:1544.5px;top:343.48px;font:400 22.2px/22.2px 'Liberation Mono', monospace;color:#2e7290;white-space:pre;letter-spacing:-0.32px">7</div>
<div style="position:absolute;left:1575px;top:343.48px;font:400 22.2px/22.2px 'Liberation Mono', monospace;color:#000;white-space:pre;letter-spacing:-0.32px;-webkit-text-stroke:0.3px currentColor"><span style="color:#0431fa">)</span><span style="color:#000000">,</span></div>
<div style="position:absolute;left:1544.5px;top:375.88px;font:400 22.2px/22.2px 'Liberation Mono', monospace;color:#2e7290;white-space:pre;letter-spacing:-0.32px">8</div>
<div style="position:absolute;left:1544.5px;top:408.28px;font:400 22.2px/22.2px 'Liberation Mono', monospace;color:#2e7290;white-space:pre;letter-spacing:-0.32px">9</div>
<div style="position:absolute;left:1575px;top:408.28px;font:400 22.2px/22.2px 'Liberation Mono', monospace;color:#000;white-space:pre;letter-spacing:-0.32px;-webkit-text-stroke:0.3px currentColor"><span style="color:#000000">renamed</span><span style="color:#000000"> </span><span style="color:#0000ff">as</span><span style="color:#000000"> </span><span style="color:#0431fa">(</span></div>
<div style="position:absolute;left:1531.5px;top:440.68px;font:400 22.2px/22.2px 'Liberation Mono', monospace;color:#2e7290;white-space:pre;letter-spacing:-0.32px">10</div>
<div style="position:absolute;left:1531.5px;top:473.08px;font:400 22.2px/22.2px 'Liberation Mono', monospace;color:#2e7290;white-space:pre;letter-spacing:-0.32px">11</div>
<div style="position:absolute;left:1575px;top:473.08px;font:400 22.2px/22.2px 'Liberation Mono', monospace;color:#000;white-space:pre;letter-spacing:-0.32px;-webkit-text-stroke:0.3px currentColor"><span style="color:#000000">    </span><span style="color:#0000ff">select</span></div>
<div style="position:absolute;left:1531.5px;top:505.48px;font:400 22.2px/22.2px 'Liberation Mono', monospace;color:#2e7290;white-space:pre;letter-spacing:-0.32px">12</div>
<div style="position:absolute;left:1531.5px;top:537.88px;font:400 22.2px/22.2px 'Liberation Mono', monospace;color:#2e7290;white-space:pre;letter-spacing:-0.32px">13</div>
<div style="position:absolute;left:1575px;top:537.88px;font:400 22.2px/22.2px 'Liberation Mono', monospace;color:#000;white-space:pre;letter-spacing:-0.32px;-webkit-text-stroke:0.3px currentColor"><span style="color:#000000">        </span><span style="color:#008000">            ids</span></div>
<div style="position:absolute;left:1680.0px;top:546.1px;width:128.0px;height:2.2px;background:repeating-linear-gradient(to right,#1d7a1d 0 11px,transparent 11px 13px)"></div>
<div style="position:absolute;left:1531.5px;top:570.28px;font:400 22.2px/22.2px 'Liberation Mono', monospace;color:#2e7290;white-space:pre;letter-spacing:-0.32px">14</div>
<div style="position:absolute;left:1575px;top:570.28px;font:400 22.2px/22.2px 'Liberation Mono', monospace;color:#000;white-space:pre;letter-spacing:-0.32px;-webkit-text-stroke:0.3px currentColor"><span style="color:#000000">&lt;&lt;&lt;&lt;&lt;&lt;&lt;</span><span style="color:#000000"> </span><span style="color:#000000">HEAD</span></div>
<div style="position:absolute;left:1531.5px;top:602.68px;font:400 22.2px/22.2px 'Liberation Mono', monospace;color:#2e7290;white-space:pre;letter-spacing:-0.32px">15</div>
<div style="position:absolute;left:1575px;top:602.68px;font:400 22.2px/22.2px 'Liberation Mono', monospace;color:#000;white-space:pre;letter-spacing:-0.32px;-webkit-text-stroke:0.3px currentColor"><span style="color:#000000">        </span><span style="color:#000000">id</span><span style="color:#000000"> </span><span style="color:#0000ff">as</span><span style="color:#000000"> </span><span style="color:#000000">order_item</span><span style="color:#000000">,</span></div>
<div style="position:absolute;left:1531.5px;top:635.08px;font:400 22.2px/22.2px 'Liberation Mono', monospace;color:#2e7290;white-space:pre;letter-spacing:-0.32px">16</div>
<div style="position:absolute;left:1575px;top:635.08px;font:400 22.2px/22.2px 'Liberation Mono', monospace;color:#000;white-space:pre;letter-spacing:-0.32px;-webkit-text-stroke:0.3px currentColor"><span style="color:#000000">=======</span></div>
<div style="position:absolute;left:1531.5px;top:667.48px;font:400 22.2px/22.2px 'Liberation Mono', monospace;color:#0b216f;white-space:pre;letter-spacing:-0.32px">17</div>
<div style="position:absolute;left:1575px;top:667.48px;font:400 22.2px/22.2px 'Liberation Mono', monospace;color:#000;white-space:pre;letter-spacing:-0.32px;-webkit-text-stroke:0.3px currentColor"><span style="color:#000000">        </span><span style="color:#000000">id</span><span style="color:#000000"> </span><span style="color:#0000ff">as</span><span style="color:#000000"> </span><span style="color:#000000">item_id</span><span style="color:#000000">,</span></div>
<div style="position:absolute;left:1531.5px;top:699.88px;font:400 22.2px/22.2px 'Liberation Mono', monospace;color:#2e7290;white-space:pre;letter-spacing:-0.32px">18</div>
<div style="position:absolute;left:1575px;top:699.88px;font:400 22.2px/22.2px 'Liberation Mono', monospace;color:#000;white-space:pre;letter-spacing:-0.32px;-webkit-text-stroke:0.3px currentColor"><span style="color:#000000">&gt;&gt;&gt;&gt;&gt;&gt;&gt;</span><span style="color:#000000"> </span><span style="color:#000000">58</span><span style="color:#000000">c1dd23d5eebd9cd2495fa7124ab61b599afa74</span></div>
<div style="position:absolute;left:1531.5px;top:732.28px;font:400 22.2px/22.2px 'Liberation Mono', monospace;color:#2e7290;white-space:pre;letter-spacing:-0.32px">19</div>
<div style="position:absolute;left:1575px;top:732.28px;font:400 22.2px/22.2px 'Liberation Mono', monospace;color:#000;white-space:pre;letter-spacing:-0.32px;-webkit-text-stroke:0.3px currentColor"><span style="color:#000000">        </span><span style="color:#000000">order_id</span><span style="color:#000000">,</span></div>
<div style="position:absolute;left:1531.5px;top:764.68px;font:400 22.2px/22.2px 'Liberation Mono', monospace;color:#2e7290;white-space:pre;letter-spacing:-0.32px">20</div>
<div style="position:absolute;left:1575px;top:764.68px;font:400 22.2px/22.2px 'Liberation Mono', monospace;color:#000;white-space:pre;letter-spacing:-0.32px;-webkit-text-stroke:0.3px currentColor"><span style="color:#000000">        </span><span style="color:#000000">sku</span><span style="color:#000000"> </span><span style="color:#0000ff">as</span><span style="color:#000000"> </span><span style="color:#000000">product_id</span></div>
<div style="position:absolute;left:1531.5px;top:797.08px;font:400 22.2px/22.2px 'Liberation Mono', monospace;color:#2e7290;white-space:pre;letter-spacing:-0.32px">21</div>
<div style="position:absolute;left:1531.5px;top:829.48px;font:400 22.2px/22.2px 'Liberation Mono', monospace;color:#2e7290;white-space:pre;letter-spacing:-0.32px">22</div>
<div style="position:absolute;left:1575px;top:829.48px;font:400 22.2px/22.2px 'Liberation Mono', monospace;color:#000;white-space:pre;letter-spacing:-0.32px;-webkit-text-stroke:0.3px currentColor"><span style="color:#000000">    </span><span style="color:#0000ff">from</span><span style="color:#000000"> </span><span style="color:#000000">source</span></div>
<div style="position:absolute;left:1531.5px;top:861.88px;font:400 22.2px/22.2px 'Liberation Mono', monospace;color:#2e7290;white-space:pre;letter-spacing:-0.32px">23</div>
<div style="position:absolute;left:1531.5px;top:894.28px;font:400 22.2px/22.2px 'Liberation Mono', monospace;color:#2e7290;white-space:pre;letter-spacing:-0.32px">24</div>
<div style="position:absolute;left:1575px;top:894.28px;font:400 22.2px/22.2px 'Liberation Mono', monospace;color:#000;white-space:pre;letter-spacing:-0.32px;-webkit-text-stroke:0.3px currentColor"><span style="color:#0431fa">)</span></div>
<div style="position:absolute;left:1531.5px;top:926.68px;font:400 22.2px/22.2px 'Liberation Mono', monospace;color:#2e7290;white-space:pre;letter-spacing:-0.32px">25</div>
<div style="position:absolute;left:1531.5px;top:959.08px;font:400 22.2px/22.2px 'Liberation Mono', monospace;color:#2e7290;white-space:pre;letter-spacing:-0.32px">26</div>
<div style="position:absolute;left:1575px;top:959.08px;font:400 22.2px/22.2px 'Liberation Mono', monospace;color:#000;white-space:pre;letter-spacing:-0.32px;-webkit-text-stroke:0.3px currentColor"><span style="color:#0000ff">select</span><span style="color:#000000"> </span><span style="color:#000000"> </span><span style="color:#000000"> </span><span style="color:#0000ff">from</span><span style="color:#000000"> </span><span style="color:#000000">renamed</span></div>
<svg style="position:absolute;left:1664px;top:961px" width="16" height="16" viewBox="0 0 16 16" fill="none"><g stroke="#000" stroke-width="1.6" stroke-linecap="round" transform="translate(8.50,7.60)"><path d="M0 -5.6V5.6M-4.9 -2.8L4.9 2.8M-4.9 2.8L4.9 -2.8"/></g></svg>
<div style="position:absolute;left:1531.5px;top:991.48px;font:400 22.2px/22.2px 'Liberation Mono', monospace;color:#2e7290;white-space:pre;letter-spacing:-0.32px">27</div>
<div style="position:absolute;left:1861.0px;top:660.4px;width:3px;height:32.4px;background:#000"></div>
<svg style="position:absolute;left:1463px;top:573px" width="14" height="14" viewBox="0 0 14 14" fill="none"><path d="M7 1v12M1 7h12" stroke="#2f7d34" stroke-width="3"/></svg>
<svg style="position:absolute;left:1463px;top:638px" width="14" height="14" viewBox="0 0 14 14" fill="none"><path d="M7 1v12M1 7h12" stroke="#2f7d34" stroke-width="3"/></svg>
<svg style="position:absolute;left:1463px;top:670px" width="14" height="14" viewBox="0 0 14 14" fill="none"><path d="M7 1v12M1 7h12" stroke="#2f7d34" stroke-width="3"/></svg>
<svg style="position:absolute;left:1463px;top:703px" width="14" height="14" viewBox="0 0 14 14" fill="none"><path d="M7 1v12M1 7h12" stroke="#2f7d34" stroke-width="3"/></svg>
<div style="position:absolute;left:2333px;top:142.2px;width:4px;height:1.6px;background:rgba(0,0,255,0.55)"></div>
<div style="position:absolute;left:2333px;top:146.2px;width:6px;height:1.6px;background:rgba(0,0,0,0.45)"></div>
<div style="position:absolute;left:2340px;top:146.2px;width:2px;height:1.6px;background:rgba(0,0,255,0.55)"></div>
<div style="position:absolute;left:2343px;top:146.2px;width:1px;height:1.6px;background:rgba(4,49,250,0.5)"></div>
<div style="position:absolute;left:2337px;top:150.2px;width:6px;height:1.6px;background:rgba(0,0,255,0.55)"></div>
<div style="position:absolute;left:2344px;top:150.2px;width:1px;height:1.6px;background:rgba(0,0,0,0.45)"></div>
<div style="position:absolute;left:2346px;top:150.2px;width:4px;height:1.6px;background:rgba(0,0,255,0.55)"></div>
<div style="position:absolute;left:2351px;top:150.2px;width:1px;height:1.6px;background:rgba(49,147,49,0.5)"></div>
<div style="position:absolute;left:2352px;top:150.2px;width:1px;height:1.6px;background:rgba(123,56,20,0.5)"></div>
<div style="position:absolute;left:2354px;top:150.2px;width:6px;height:1.6px;background:rgba(0,0,0,0.45)"></div>
<div style="position:absolute;left:2360px;top:150.2px;width:1px;height:1.6px;background:rgba(4,49,250,0.5)"></div>
<div style="position:absolute;left:2361px;top:150.2px;width:6px;height:1.6px;background:rgba(163,21,21,0.55)"></div>
<div style="position:absolute;left:2367px;top:150.2px;width:1px;height:1.6px;background:rgba(0,0,0,0.45)"></div>
<div style="position:absolute;left:2369px;top:150.2px;width:11px;height:1.6px;background:rgba(163,21,21,0.55)"></div>
<div style="position:absolute;left:2380px;top:150.2px;width:1px;height:1.6px;background:rgba(4,49,250,0.5)"></div>
<div style="position:absolute;left:2382px;top:150.2px;width:1px;height:1.6px;background:rgba(123,56,20,0.5)"></div>
<div style="position:absolute;left:2383px;top:150.2px;width:1px;height:1.6px;background:rgba(49,147,49,0.5)"></div>
<div style="position:absolute;left:2333px;top:154.2px;width:1px;height:1.6px;background:rgba(4,49,250,0.5)"></div>
<div style="position:absolute;left:2334px;top:154.2px;width:1px;height:1.6px;background:rgba(0,0,0,0.45)"></div>
<div style="position:absolute;left:2333px;top:158.2px;width:7px;height:1.6px;background:rgba(0,0,0,0.45)"></div>
<div style="position:absolute;left:2341px;top:158.2px;width:2px;height:1.6px;background:rgba(0,0,255,0.55)"></div>
<div style="position:absolute;left:2344px;top:158.2px;width:1px;height:1.6px;background:rgba(4,49,250,0.5)"></div>
<div style="position:absolute;left:2337px;top:162.2px;width:6px;height:1.6px;background:rgba(0,0,255,0.55)"></div>
<div style="position:absolute;left:2341px;top:166.2px;width:10px;height:1.6px;background:rgba(0,128,0,0.5)"></div>
<div style="position:absolute;left:2353px;top:166.2px;width:3px;height:1.6px;background:rgba(0,128,0,0.5)"></div>
<div style="position:absolute;left:2333px;top:168.2px;width:7px;height:1.6px;background:rgba(0,0,0,0.3)"></div>
<div style="position:absolute;left:2341px;top:168.2px;width:4px;height:1.6px;background:rgba(0,0,0,0.45)"></div>
<div style="position:absolute;left:2341px;top:170.2px;width:2px;height:1.6px;background:rgba(0,0,0,0.45)"></div>
<div style="position:absolute;left:2344px;top:170.2px;width:2px;height:1.6px;background:rgba(0,0,255,0.55)"></div>
<div style="position:absolute;left:2347px;top:170.2px;width:10px;height:1.6px;background:rgba(0,0,0,0.45)"></div>
<div style="position:absolute;left:2357px;top:170.2px;width:1px;height:1.6px;background:rgba(0,0,0,0.45)"></div>
<div style="position:absolute;left:2333px;top:172.2px;width:7px;height:1.6px;background:rgba(0,0,0,0.3)"></div>
<div style="position:absolute;left:2341px;top:174.2px;width:2px;height:1.6px;background:rgba(0,0,0,0.45)"></div>
<div style="position:absolute;left:2344px;top:174.2px;width:2px;height:1.6px;background:rgba(0,0,255,0.55)"></div>
<div style="position:absolute;left:2347px;top:174.2px;width:7px;height:1.6px;background:rgba(0,0,0,0.45)"></div>
<div style="position:absolute;left:2354px;top:174.2px;width:1px;height:1.6px;background:rgba(0,0,0,0.45)"></div>
<div style="position:absolute;left:2333px;top:176.2px;width:7px;height:1.6px;background:rgba(0,0,0,0.3)"></div>
<div style="position:absolute;left:2341px;top:176.2px;width:2px;height:1.6px;background:rgba(0,0,0,0.45)"></div>
<div style="position:absolute;left:2343px;top:176.2px;width:38px;height:1.6px;background:rgba(0,0,0,0.45)"></div>
<div style="position:absolute;left:2341px;top:178.2px;width:8px;height:1.6px;background:rgba(0,0,0,0.45)"></div>
<div style="position:absolute;left:2349px;top:178.2px;width:1px;height:1.6px;background:rgba(0,0,0,0.45)"></div>
<div style="position:absolute;left:2341px;top:180.2px;width:3px;height:1.6px;background:rgba(0,0,0,0.45)"></div>
<div style="position:absolute;left:2345px;top:180.2px;width:2px;height:1.6px;background:rgba(0,0,255,0.55)"></div>
<div style="position:absolute;left:2348px;top:180.2px;width:10px;height:1.6px;background:rgba(0,0,0,0.45)"></div>
<div style="position:absolute;left:2337px;top:184.2px;width:4px;height:1.6px;background:rgba(0,0,255,0.55)"></div>
<div style="position:absolute;left:2342px;top:184.2px;width:6px;height:1.6px;background:rgba(0,0,0,0.45)"></div>
<div style="position:absolute;left:2333px;top:188.2px;width:1px;height:1.6px;background:rgba(4,49,250,0.5)"></div>
<div style="position:absolute;left:2333px;top:192.2px;width:6px;height:1.6px;background:rgba(0,0,255,0.55)"></div>
<div style="position:absolute;left:2340px;top:192.2px;width:1px;height:1.6px;background:rgba(0,0,0,0.45)"></div>
<div style="position:absolute;left:2342px;top:192.2px;width:4px;height:1.6px;background:rgba(0,0,255,0.55)"></div>
<div style="position:absolute;left:2347px;top:192.2px;width:7px;height:1.6px;background:rgba(0,0,0,0.45)"></div>
<div style="position:absolute;left:1371px;top:142px;width:1px;height:908px;background:#ececec"></div>
<div style="position:absolute;left:1372px;top:142px;width:24px;height:3px;background:#505050"></div>
<div style="position:absolute;left:1396px;top:142px;width:10px;height:908px;background:linear-gradient(to right,#e6e6e6,#fefefe)"></div>
<div style="position:absolute;left:1449px;top:142px;width:11px;height:908px;background:linear-gradient(to right,#fefefe,#e4e4e4)"></div>
<div style="position:absolute;left:2397px;top:142px;width:1px;height:908px;background:#ececec"></div>
<div style="position:absolute;left:2398px;top:408px;width:24px;height:3px;background:#505050"></div>
<div style="position:absolute;left:2423px;top:142px;width:53px;height:466px;background:#c1c1c1"></div>
<div style="position:absolute;left:497px;top:1050px;width:1979px;height:356px;background:#fefefe"></div>
<div style="position:absolute;left:497px;top:1132px;width:1979px;height:1px;background:#e6e6e6"></div>
<div style="position:absolute;left:1015px;top:1050px;width:1px;height:82px;background:#ececec"></div>
<div style="position:absolute;left:518px;top:1060px;width:158px;height:56px;box-sizing:border-box;border:1.5px solid #8f8a8a;border-radius:10px;background:#fefefe"></div>
<svg style="position:absolute;left:532px;top:1074px" width="30" height="30" viewBox="0 0 30 30" fill="none"><g stroke="#1a1a1a" stroke-width="1.8" fill="none"><rect x="2.9" y="2.9" width="23.2" height="23.2" rx="3"/><path d="M2.9 13.5h23.2M2.9 19.6h23.2M14.3 8V26"/></g><path d="M2 5.5Q2 2 5.5 2h18Q27 2 27 5.5V8.5H2z" fill="#1a1a1a"/></svg>
<div style="position:absolute;left:573.98px;top:1077.22px;font:400 23.6px/23.6px 'Liberation Sans', sans-serif;color:#141414;white-space:pre;transform:scaleX(1.0194);transform-origin:0 0;-webkit-text-stroke:0.75px #141414">Preview</div>
<div style="position:absolute;left:691px;top:1060px;width:162px;height:56px;box-sizing:border-box;border:1.5px solid #8f8a8a;border-radius:10px;background:#fefefe"></div>
<svg style="position:absolute;left:703px;top:1076px" width="32" height="26" viewBox="0 0 32 26" fill="none"><g stroke="#1a1a1a" stroke-width="1.5" fill="none" stroke-linecap="round" stroke-linejoin="round"><path d="M9.2 6L3.4 12.2l5.8 6.2M22.4 6l5.8 6.2-5.8 6.2M18.3 4.2l-5 15.8"/></g></svg>
<div style="position:absolute;left:745.65px;top:1077.22px;font:400 23.6px/23.6px 'Liberation Sans', sans-serif;color:#141414;white-space:pre;transform:scaleX(1.0501);transform-origin:0 0;-webkit-text-stroke:0.75px #141414">Compile</div>
<div style="position:absolute;left:867px;top:1060px;width:127px;height:56px;box-sizing:border-box;border:1.5px solid #8f8a8a;border-radius:10px;background:#fefefe"></div>
<div style="position:absolute;left:938px;top:1061px;width:1.1px;height:54px;background:#8f8a8a"></div>
<div style="position:absolute;left:882.21px;top:1077.32px;font:400 23.6px/23.6px 'Liberation Sans', sans-serif;color:#141414;white-space:pre;transform:scaleX(1.0858);transform-origin:0 0;-webkit-text-stroke:0.75px #141414">Lint</div>
<svg style="position:absolute;left:955px;top:1080px" width="20" height="16" viewBox="0 0 20 16" fill="none"><path d="M2.5 3.5l7 7 7-7" stroke="#1a1a1a" stroke-width="1.6" fill="none"/></svg>
<div style="position:absolute;left:1073.86px;top:1079.13px;font:400 23px/23px 'Liberation Sans', sans-serif;color:#1a1717;white-space:pre;transform:scaleX(1.0373);transform-origin:0 0;-webkit-text-stroke:0.4px #1a1717">Results</div>
<div style="position:absolute;left:1211.13px;top:1079.13px;font:400 23px/23px 'Liberation Sans', sans-serif;color:#1a1717;white-space:pre;transform:scaleX(1.0710);transform-origin:0 0;-webkit-text-stroke:0.4px #1a1717">Compiled code</div>
<div style="position:absolute;left:1183px;top:1129px;width:221px;height:3px;background:#8a8580"></div>
<div style="position:absolute;left:2224px;top:1060px;width:232px;height:58px;box-sizing:border-box;border:1.5px solid #8f8a8a;border-radius:11px;background:#fefefe"></div>
<svg style="position:absolute;left:2228px;top:1070px" width="44" height="38" viewBox="0 0 44 38" fill="none"><defs><linearGradient id="cg" x1="0" y1="0" x2="1" y2="0"><stop offset="0.35" stop-color="#e8601c"/><stop offset="0.85" stop-color="#5a2df0"/></linearGradient></defs><g fill="none" stroke-width="1.6" stroke-linejoin="round" stroke-linecap="round"><path d="M22.2 12.8L15.8 9.2Q12.6 7.6 11.5 10.3Q11 12 12.7 14.5Q15.4 18.3 12.7 22.4Q11 25 11.8 26.9Q13.2 29.6 16.3 27.8L22.2 23.8Q18 21.8 18 18.3Q18 15 22.2 12.8" stroke="#e8601c"/><path d="M22.2 12.8L29.5 8.9Q31.5 8 32.8 9.5Q33.5 11 32.3 13Q29.3 18.2 32.3 23.8Q33.6 26 32.6 27.6Q31 29.2 28.8 27.7L26.5 26.3" stroke="url(#cg)"/><path d="M25.6 15.3Q27.2 18.5 25 21.5Q23.8 23 22.2 23.8" stroke="#c0563a"/></g><path d="M22.5 16.6L23.3 18.3L22.5 20L21.7 18.3Z" fill="#e8601c"/></svg>
<div style="position:absolute;left:2277.00px;top:1079.04px;font:400 22.4px/22.4px 'Liberation Sans', sans-serif;color:#1a1a1a;white-space:pre;transform:scaleX(1.1408);transform-origin:0 0;-webkit-text-stroke:0.6px #1a1a1a">dbt Copilot</div>
<svg style="position:absolute;left:2417px;top:1082px" width="20" height="14" viewBox="0 0 20 14" fill="none"><path d="M2.5 2.5l7 7 7-7" stroke="#1a1a1a" stroke-width="1.6" fill="none"/></svg>
<svg style="position:absolute;left:1455px;top:1192px" width="64" height="42" viewBox="0 0 64 42" fill="none"><g stroke="#6e6868" stroke-width="3.3" fill="none" stroke-linecap="round" stroke-linejoin="round"><path d="M18 10L4.4 21.5L18 33M46.2 10L59.6 21.5L46.2 33M36 4.8L27.2 37.2"/></g></svg>
<div style="position:absolute;left:1344.50px;top:1275.08px;font:400 29.2px/29.2px 'Liberation Sans', sans-serif;color:#484343;white-space:pre;transform:scaleX(1.0421);transform-origin:0 0;-webkit-text-stroke:0.85px #484343">There's nothing here.</div>
<div style="position:absolute;left:1037.12px;top:1323.84px;font:400 25px/25px 'Liberation Sans', sans-serif;color:#6a6464;white-space:pre;transform:scaleX(1.0419);transform-origin:0 0;-webkit-text-stroke:0.35px #6a6464">Press Compile above to preview the SQL dbt will run against your warehouse.</div>
<div style="position:absolute;left:0px;top:1406px;width:2476px;height:72px;background:linear-gradient(#fefefe 0%,#f9f9f9 25%,#f0f0f0 55%,#e5e5e5 85%,#dfdfdf 100%)"></div>
<div style="position:absolute;left:0px;top:1406px;width:2476px;height:1px;background:#e6e4e6"></div>
<div style="position:absolute;left:71px;top:1407px;width:1px;height:71px;background:#e6e4e6"></div>
<svg style="position:absolute;left:26px;top:1434px" width="20" height="14" viewBox="0 0 20 14" fill="none"><path d="M3.2 11l6.3-7 6.3 7" stroke="#3a3535" stroke-width="1.7" fill="none"/></svg>
<div style="position:absolute;left:79px;top:1412px;width:1690px;height:65px;box-sizing:border-box;border:1px solid rgba(0,0,0,0.045);border-top-color:rgba(0,0,0,0.02);border-radius:14px;background:transparent"></div>
<div style="position:absolute;left:101.00px;top:1432.57px;font:400 22.6px/22.6px 'Liberation Sans', sans-serif;color:#5e5858;white-space:pre;transform:scaleX(1.1099);transform-origin:0 0;-webkit-text-stroke:0.35px #5e5858">dbt build --select &lt;model_name&gt;</div>
<div style="position:absolute;left:1791px;top:1424px;width:72px;height:36px;background:#5b3ded;border-radius:18px"></div>
<svg style="position:absolute;left:1802px;top:1432px" width="22" height="20" viewBox="0 0 22 20" fill="none"><path d="M3 10l5 5L18 4" stroke="#fff" stroke-width="2" fill="none"/></svg>
<div style="position:absolute;left:1831px;top:1429px;width:25px;height:25px;border-radius:50%;background:#fff"></div>
<div style="position:absolute;left:1883.16px;top:1430.16px;font:400 24.5px/24.5px 'Liberation Sans', sans-serif;color:#444040;white-space:pre;transform:scaleX(1.1185);transform-origin:0 0;-webkit-text-stroke:0.75px #444040">Defer to staging/production</div>
<svg style="position:absolute;left:2219px;top:1428px" width="24" height="24" viewBox="0 0 24 24" fill="none"><g stroke="#7a7474" stroke-width="1.4" fill="none"><circle cx="11.5" cy="11.5" r="10"/><path d="M8.5 8.8a3 3 0 1 1 4.2 2.8c-.9.4-1.2 1-1.2 2v.8"/></g><circle cx="11.5" cy="17.3" r="1" fill="#7a7474"/></svg>
<div style="position:absolute;left:2263px;top:1421px;width:127px;height:43px;background:#c5f5cc;border-radius:11px"></div>
<svg style="position:absolute;left:2272px;top:1429px" width="28" height="28" viewBox="0 0 28 28" fill="none"><circle cx="14" cy="13.5" r="11.5" stroke="#1a1a1a" stroke-width="1.8" fill="none"/></svg>
<div style="position:absolute;left:2308.89px;top:1430.16px;font:400 24.5px/24.5px 'Liberation Sans', sans-serif;color:#141414;white-space:pre;transform:scaleX(0.9573);transform-origin:0 0;-webkit-text-stroke:0.75px #141414">Ready</div>
<div style="position:absolute;left:2404px;top:1415px;width:60px;height:55px;box-sizing:border-box;border:1.5px solid #8f8a8a;border-radius:10px;background:#fefefe"></div>
<div style="position:absolute;left:2421.7000000000003px;top:1439.8px;width:5.2px;height:5.2px;border-radius:50%;background:#1a1a1a"></div>
<div style="position:absolute;left:2430.8px;top:1439.8px;width:5.2px;height:5.2px;border-radius:50%;background:#1a1a1a"></div>
<div style="position:absolute;left:2439.9px;top:1439.8px;width:5.2px;height:5.2px;border-radius:50%;background:#1a1a1a"></div>
<svg style="position:absolute;left:2446px;top:1450px" width="30" height="28" viewBox="0 0 30 28" fill="none"><path d="M9 28Q24 26 30 16V28Z" fill="#000"/></svg>
<div style="position:absolute;left:0px;top:0px;width:1px;height:1478px;background:#e2e0e2"></div>
<div style="position:absolute;left:500px;top:1.5px;width:1973.5px;height:1048.5px;box-sizing:border-box;border:5px solid #e73d24"></div>
<div style="position:absolute;left:3px;top:242px;width:489px;height:125px;box-sizing:border-box;border:5px solid #e73d24"></div>
<div style="position:absolute;left:47px;top:1038px;width:444px;height:65px;box-sizing:border-box;border:5px solid #e73d24"></div>
</body></html>
